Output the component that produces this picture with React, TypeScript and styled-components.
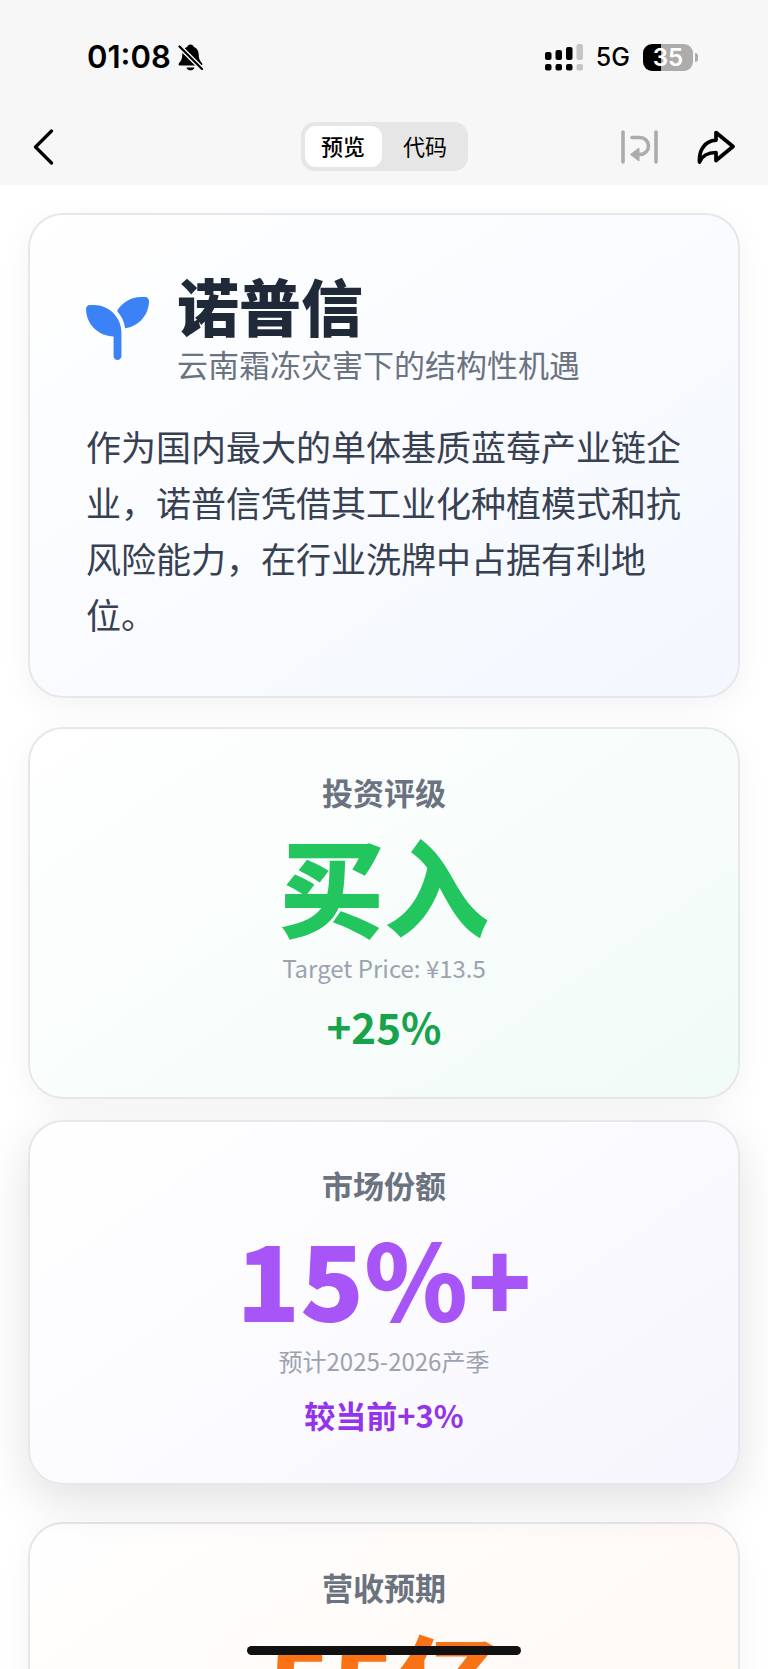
import React from "react";
import styled, { createGlobalStyle } from "styled-components";
import { FaSeedling } from "react-icons/fa6";

const GlobalStyle = createGlobalStyle`
  *, *::before, *::after { box-sizing: border-box; }
  body {
    margin: 0;
    background: #ffffff;
    font-family: "Noto Sans CJK SC", "Noto Sans", sans-serif;
  }
  h1, h2, p { margin: 0; }
  button {
    border: 0;
    padding: 0;
    background: none;
    color: inherit;
    font: inherit;
    cursor: pointer;
  }
`;

const Screen = styled.div`
  display: flex;
  flex-direction: column;
  height: 100vh;
  overflow: hidden;
`;

const TopArea = styled.header`
  flex: none;
  background: #f7f7f7;
  color: #000000;
`;

const StatusBar = styled.div`
  display: flex;
  align-items: center;
  justify-content: space-between;
  height: 114px;
  padding: 0 70px 0 87px;
  font-family: Inter, sans-serif;
`;

const StatusGroup = styled.div<{ $gap: number }>`
  display: flex;
  align-items: center;
  gap: ${(p) => p.$gap}px;
`;

const Clock = styled.span`
  font-size: 31px;
  line-height: 40px;
  font-weight: 600;
`;

const Network = styled.span`
  font-size: 25px;
  line-height: 40px;
  font-weight: 500;
`;

const Battery = styled.div`
  display: flex;
  align-items: center;
  gap: 2px;
`;

const BatteryBody = styled.div`
  width: 50px;
  height: 27px;
  border-radius: 9px;
  background: linear-gradient(to right, #000000 35%, #acacac 35%);
  color: #ffffff;
  font-size: 24px;
  line-height: 27px;
  font-weight: 600;
  text-align: center;
`;

const BatteryTip = styled.div`
  width: 3px;
  height: 9px;
  border-radius: 0 4px 4px 0;
  background: #acacac;
`;

const NavBar = styled.nav`
  display: grid;
  grid-template-columns: 1fr auto 1fr;
  align-items: center;
  height: 71px;
  padding: 0 33px 6px;
`;

const NavActions = styled.div`
  display: flex;
  justify-content: flex-end;
  gap: 38px;
`;

const IconButton = styled.button`
  display: flex;
  justify-self: start;
`;

const Segmented = styled.div`
  display: flex;
  gap: 5px;
  padding: 4px;
  border-radius: 14px;
  background: #e6e6e6;
`;

const Segment = styled.button<{ $active?: boolean }>`
  width: 77px;
  height: 41px;
  padding-bottom: 3px;
  border-radius: 11px;
  background: ${(p) => (p.$active ? "#ffffff" : "transparent")};
  font-size: 22px;
  line-height: 38px;
  font-weight: ${(p) => (p.$active ? 500 : 400)};
`;

const Content = styled.main`
  flex: 1;
  min-height: 0;
  display: flex;
  flex-direction: column;
  gap: 29px;
  padding: 28px;
  overflow-y: auto;
  scrollbar-width: none;
`;

const Card = styled.section<{ $tint: string; $raised?: boolean }>`
  flex: none;
  border: 2px solid #e5e7eb;
  border-radius: 35px;
  background: linear-gradient(145deg, #ffffff 0%, ${(p) => p.$tint} 100%);
  box-shadow: ${(p) =>
    p.$raised ? "0 16px 48px rgba(0, 0, 0, 0.12)" : "0 8px 32px rgba(0, 0, 0, 0.05)"};
  transform: ${(p) => (p.$raised ? "translateY(-8px)" : "none")};
`;

const IntroCard = styled(Card)`
  padding: 54px 56px;
`;

const IntroHeader = styled.div`
  display: flex;
  align-items: center;
  gap: 28px;
  margin-bottom: 31px;
  color: #3b82f6;
`;

const CompanyName = styled.h1`
  color: #1f2937;
  font-size: 62px;
  line-height: 72px;
  font-weight: 900;
`;

const Subtitle = styled.p`
  color: #6b7280;
  font-size: 31px;
  line-height: 46px;
`;

const Summary = styled.p`
  color: #374151;
  font-size: 35px;
  line-height: 56px;
`;

const MetricCard = styled(Card)`
  padding: 43px 56px 44px;
  text-align: center;
`;

const MetricLabel = styled.h2`
  margin-bottom: 18px;
  color: #6b7280;
  font-size: 31px;
  line-height: 40px;
  font-weight: 700;
`;

const MetricValue = styled.p<{ $color: string }>`
  margin-bottom: 12px;
  color: ${(p) => p.$color};
  font-size: 105px;
  line-height: 106px;
  font-weight: 900;
`;

const MetricNote = styled.p`
  margin-bottom: 10px;
  color: #9ca3af;
  font-size: 24px;
  line-height: 40px;
`;

const MetricChange = styled.p<{ $color: string; $large?: boolean }>`
  color: ${(p) => p.$color};
  font-size: ${(p) => (p.$large ? 42 : 31)}px;
  line-height: ${(p) => (p.$large ? 55 : 48)}px;
  font-weight: 700;
`;

const HomeIndicator = styled.div`
  position: fixed;
  bottom: 14px;
  left: 50%;
  width: 274px;
  height: 9px;
  margin-left: -137px;
  border-radius: 5px;
  background: #111111;
`;

interface Metric {
  label: string;
  value: string;
  note: string;
  change: string;
  color: string;
  changeColor: string;
  tint: string;
  large?: boolean;
  raised?: boolean;
}

const metrics: Metric[] = [
  {
    label: "投资评级",
    value: "买入",
    note: "Target Price: ¥13.5",
    change: "+25%",
    color: "#22c55e",
    changeColor: "#16a34a",
    tint: "#f1fbf8",
    large: true,
  },
  {
    label: "市场份额",
    value: "15%+",
    note: "预计2025-2026产季",
    change: "较当前+3%",
    color: "#a855f7",
    changeColor: "#9333ea",
    tint: "#f7f5fd",
    raised: true,
  },
  {
    label: "营收预期",
    value: "55亿",
    note: "",
    change: "",
    color: "#f97316",
    changeColor: "#ea580c",
    tint: "#fff7f2",
  },
];

function MutedBell() {
  return (
    <svg width="25" height="27" viewBox="0 0 25 27" aria-hidden="true">
      <path
        d="M12.500 .5c-1.800 0-2.900 1-3.200 2.300C6 4 4.400 6.800 4.300 10.500c-.1 4-1 6-2.800 8-1.600 1.800-1 3.100 1 3.100h20c2 0 2.600-1.300 1-3.100-1.800-2-2.700-4-2.800-8-.1-3.700-1.700-6.500-5-7.700C15.400 1.500 14.300.5 12.500.5z"
        fill="#000"
      />
      <path d="M8.500 23.400h8c-.5 1.800-2 2.900-4 2.900s-3.500-1.100-4-2.900z" fill="#000" />
      <path d="M1.500 2.500 24 25" stroke="#f7f7f7" strokeWidth="5" />
      <path d="M1.500 2.500 24 25" stroke="#000" strokeWidth="2.200" strokeLinecap="round" />
    </svg>
  );
}

function SignalBars() {
  return (
    <svg width="38" height="27" viewBox="0 0 38 27" aria-hidden="true">
      <rect x="0" y="8" width="6.500" height="8" rx="2" />
      <rect x="10.500" y="6" width="6.500" height="10" rx="2" />
      <rect x="21" y="3" width="6.500" height="13" rx="2" />
      <rect x="31.500" y="0" width="6.500" height="16" rx="2" fill="#c5c5c5" />
      <rect x="0" y="20" width="6.500" height="6.500" rx="2" />
      <rect x="10.500" y="20" width="6.500" height="6.500" rx="2" />
      <rect x="21" y="20" width="6.500" height="6.500" rx="2" />
      <rect x="31.500" y="20" width="6.500" height="6.500" rx="2" fill="#c5c5c5" />
    </svg>
  );
}

function BackIcon() {
  return (
    <svg width="22" height="36" viewBox="0 0 22 36" fill="none" aria-hidden="true">
      <path
        d="M18.500 2 2.500 18l16 16"
        stroke="#000"
        strokeWidth="3.200"
        strokeLinecap="round"
        strokeLinejoin="round"
      />
    </svg>
  );
}

function WrapIcon() {
  return (
    <svg width="38" height="34" viewBox="0 0 38 34" fill="none" aria-hidden="true">
      <path
        d="M2 2v30M35 2v30M11 7.500h8a8.500 8.500 0 0 1 0 17h-2"
        stroke="#acacac"
        strokeWidth="3.600"
        strokeLinecap="round"
      />
      <path d="m9.500 24.500 8.500-6.500v13z" fill="#acacac" stroke="#acacac" strokeLinejoin="round" />
    </svg>
  );
}

function ShareIcon() {
  return (
    <svg width="38" height="34" viewBox="0 0 38 34" fill="none" aria-hidden="true">
      <path
        d="M19 2.500 36 16.500 19 30.500v-8C11 22.500 5.500 25 2.500 32 1.800 19.500 8 11.200 19 10.200z"
        stroke="#000"
        strokeWidth="3.700"
        strokeLinejoin="round"
      />
    </svg>
  );
}

export default function App() {
  return (
    <Screen>
      <GlobalStyle />
      <TopArea>
        <StatusBar>
          <StatusGroup $gap={7}>
            <Clock>01:08</Clock>
            <MutedBell />
          </StatusGroup>
          <StatusGroup $gap={13}>
            <SignalBars />
            <Network>5G</Network>
            <Battery>
              <BatteryBody>35</BatteryBody>
              <BatteryTip />
            </Battery>
          </StatusGroup>
        </StatusBar>
        <NavBar>
          <IconButton type="button" aria-label="返回">
            <BackIcon />
          </IconButton>
          <Segmented>
            <Segment type="button" $active aria-pressed="true">
              预览
            </Segment>
            <Segment type="button" aria-pressed="false">
              代码
            </Segment>
          </Segmented>
          <NavActions>
            <IconButton type="button" aria-label="自动换行">
              <WrapIcon />
            </IconButton>
            <IconButton type="button" aria-label="分享">
              <ShareIcon />
            </IconButton>
          </NavActions>
        </NavBar>
      </TopArea>

      <Content>
        <IntroCard $tint="#f3f7fe">
          <IntroHeader>
            <FaSeedling size={63} aria-hidden="true" />
            <div>
              <CompanyName>诺普信</CompanyName>
              <Subtitle>云南霜冻灾害下的结构性机遇</Subtitle>
            </div>
          </IntroHeader>
          <Summary>
            作为国内最大的单体基质蓝莓产业链企业，诺普信凭借其工业化种植模式和抗风险能力，在行业洗牌中占据有利地位。
          </Summary>
        </IntroCard>

        {metrics.map((m) => (
          <MetricCard key={m.label} $tint={m.tint} $raised={m.raised}>
            <MetricLabel>{m.label}</MetricLabel>
            <MetricValue $color={m.color}>{m.value}</MetricValue>
            {m.note && <MetricNote>{m.note}</MetricNote>}
            {m.change && (
              <MetricChange $color={m.changeColor} $large={m.large}>
                {m.change}
              </MetricChange>
            )}
          </MetricCard>
        ))}
      </Content>
      <HomeIndicator />
    </Screen>
  );
}
